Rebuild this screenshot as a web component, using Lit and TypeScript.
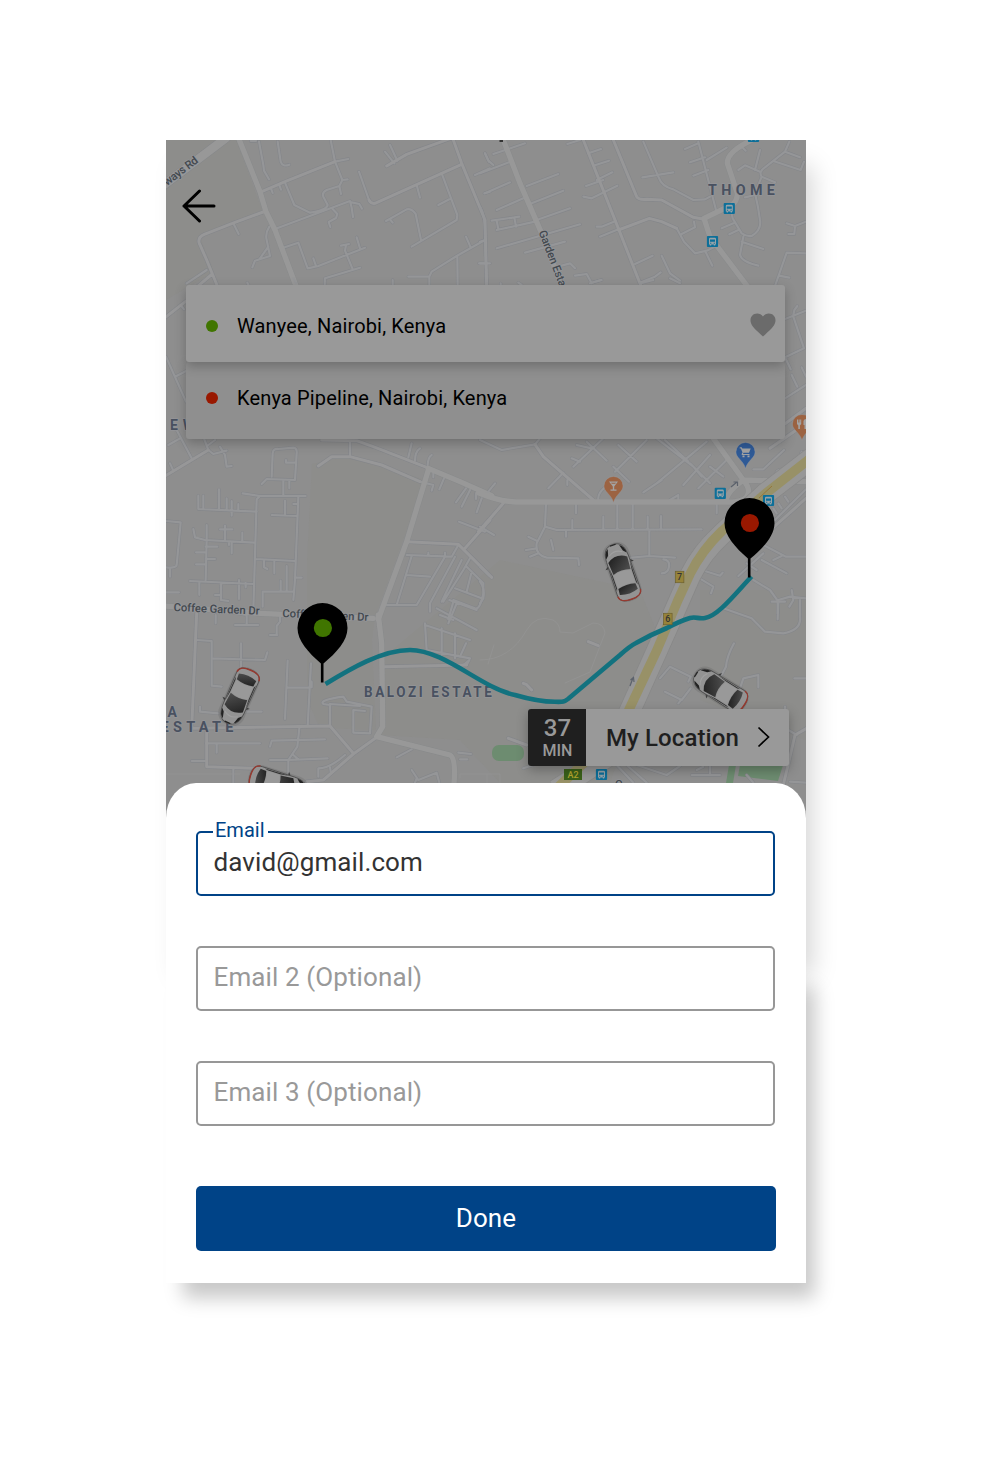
import { LitElement, html, css, svg } from "lit";
import { customElement, property } from "lit/decorators.js";

interface Tile {
  x: number;
  y: number;
  thin: string;
  mid?: string;
  wide?: string;
}

// Street geometry, one entry per map tile; tile units are a third of a pixel.
const TILES: Tile[] = [
  {
    x: 160, y: 130,
    wide: "M238 30L300 185L318 245L345 300L408 468",
    mid: "M300 187L375 155L525 95M318 243L225 277L133 313Q112 322 118 340L140 390L172 468M157 432L112 470M627 210Q632 222 645 220L845 130L905 103M880 30L905 100L975 270L980 468M680 108L740 73L870 26",
    thin: "M345 297L570 213M525 95L565 87M297 35L310 105L312 122L327 148M353 35L362 95Q368 112 388 104M512 30L525 95L547 150L538 168L543 192M547 150L563 148M538 168L500 180Q485 188 490 200L503 225Q500 240 450 248L403 225L375 158M333 175L338 189M358 165L363 179M518 237L532 252L528 264L506 276L511 291M570 213L575 233L579 261M575 217L598 222L606 236M597 125L627 210M770 165L780 203M845 130L892 255L890 270L755 350M868 208L835 225M678 273L740 238Q755 235 767 252L783 330M690 268L698 278M675 65L703 100M690 45L712 92M975 330L890 378L815 425L808 440L745 440M808 440V468M892 380L893 468M918 320L932 352M975 70L987 95M945 135L990 115M973 190L990 185M957 400H990M365 355L415 338L443 415L475 408L615 353M543 347L567 342M558 345L555 362L577 415M590 322L600 355M600 413L495 445L494 468M460 385L468 408M328 290Q315 310 320 330L330 378L285 392L277 412M325 350L300 385M220 280L236 312M698 450V468M262 458L268 470M272 33L288 33"
  },
  {
    x: 480, y: 130,
    wide: "M70 30L120 160L185 310L245 468M820 28Q740 65 742 100L772 190Q772 215 755 225L672 265L690 320L803 470",
    mid: "M400 30L470 200Q475 210 500 208L545 210L640 262L672 268M310 30L415 295L483 468M415 300L508 265L545 275L590 295",
    thin: "M490 35L535 140Q545 170 580 178L640 210L675 208L690 200M655 35L708 240M590 295L612 335L645 370L680 362L715 345M350 290L365 290L407 273M360 320L415 298M605 312L645 292L642 275M675 362L697 407M340 107L387 92M350 150L397 127M310 200L335 205L412 167M318 168L370 150M325 70L363 57M262 42L300 30M487 142L580 127M615 57L655 40M630 97L675 82M640 137L685 120M680 90L740 53M785 50L797 62M840 60L825 120M775 120L795 106L840 125M855 112L915 65L928 35M915 65L960 82M880 93L962 120L972 95M855 112Q835 125 845 140L825 190Q835 230 840 270Q845 300 815 318Q800 320 785 310L758 265L752 240M795 202L825 195M725 295L760 280M748 313L775 300M785 335L850 357M790 320L780 375Q785 395 835 407M920 280L945 288L978 275M945 288L943 312L925 312M978 370L920 368L885 468M897 437L928 443M845 140L885 157M15 190L90 157M50 240L130 205M35 272L118 260M50 300L165 275M50 272L55 297M103 262L108 290M140 168L235 132M155 220L250 182M170 270L270 235M50 355L300 283M135 368L255 335M40 72L85 57L135 40M0 130L92 95M15 70L25 92L40 105M245 407L270 400L285 415M285 437L320 432L335 460M340 457L362 450M465 402L518 377M483 457L525 440L542 427M545 377L570 430L600 452M0 230Q18 260 15 330L20 468M0 335L15 330M0 400L18 400M62 468V460M115 458L125 465"
  },
  {
    x: 160, y: 280,
    mid: "M15 113L80 62",
    thin: "M18 230L78 365M45 290L80 272M62 75L72 88M80 10L140 -30M400 -5L408 10"
  },
  {
    x: 480, y: 280,
    mid: "M910 435L978 385M870 505L978 430",
    thin: "M915 117L978 92M940 110L972 205L915 232M940 105L943 90L952 78M915 232L932 268M935 285L952 320M965 262L978 290M915 355L978 315M330 10L365 0M480 10L520 0M570 -5L600 10"
  },
  {
    x: 160, y: 430,
    wide: "M805 120L740 335L655 568M805 115L900 155L995 197M740 335L740 336",
    mid: "M15 138L145 60M740 335L895 343L995 442M915 355L990 270M485 30L590 32L640 50L800 112M475 108L515 80L570 80L665 105L780 155",
    thin: "M130 20L145 60L160 72L200 62M50 0L95 85M25 45L60 25M30 100L40 122M180 50L195 75L200 110L215 108M165 30L145 45M780 155L820 165L815 182M570 35V80M335 140L338 70Q340 55 355 57L400 53Q412 55 410 70L405 150L320 147L305 162M378 90V98H408M370 150V195M388 150V175M248 190L300 198H437M300 198L290 208L280 540M415 200L405 450L400 510M115 197V237L290 245M130 197V237M177 178V237M200 205V240M215 213V257M235 222V240M375 212V255M335 255L412 258M400 222H414M18 273L62 277L50 405Q48 415 18 412M30 415V440M100 297L105 322L135 330L283 338M140 285V330L137 450M195 287V330M180 298H217M247 308V333M207 338V345M215 338V370M137 350H172M108 367H137M137 387H165M108 403H137M90 453L280 462M118 457V495M183 460V510L205 513M165 495H182M237 450V507M257 460V472M287 387L405 393M312 393V412L322 417M343 395V430M380 408V485M362 452V482M308 530V485H400M405 443H425M18 487H57M897 275L975 305M755 40L745 82M780 55Q765 65 765 92M815 75Q805 80 803 105M820 130V142M852 145L838 178M918 175L888 217M930 180L905 230M948 190V207M965 205L950 247M740 375L875 380L895 345M755 378L710 525M855 380L770 525H680M805 368V378M855 368V378M740 435L810 440M905 390L845 515M885 380L810 520L810 545M930 385L910 420L850 515M920 410L970 460V490Q960 540 945 535L880 510M885 475L965 505M935 425L920 485M880 515L865 568M840 555L880 570"
  },
  {
    x: 480, y: 430,
    wide: "M-5 188Q60 215 110 216H740M700 25L790 150L980 155M790 150Q815 180 800 200Q785 218 740 216Q735 190 790 150",
    mid: "M165 43L190 80L340 210M70 220L-5 305M978 205L860 310",
    thin: "M0 30L65 60L165 43L180 25M355 210Q352 190 375 172M205 175L250 128M262 150V165M280 110L370 25M275 85L300 95M290 45L335 55M320 35L380 92M405 125L500 30M415 45L470 95M400 110L447 155M530 25L640 110L665 140M545 150L490 187M530 160L680 35M555 30L625 95M690 75L610 165M630 100L690 160M745 85L655 175M690 110L730 140M570 210L595 195V212M0 290L42 315M25 185L45 160M198 220L195 290L170 340Q165 375 200 383L295 385L297 405M195 290L230 300L665 298M145 320L170 332M138 360L170 355M150 380L175 370M213 330L220 360M288 225V250M258 305V320M277 270V295M370 260V295M412 220V298M458 220V298M503 260V298M543 258V298M508 300V378L430 385M508 378L585 383M550 388Q570 390 567 410Q565 430 545 430M0 410L28 437M0 455Q15 475 10 505L0 520M820 118H850L912 60M960 80L965 65L978 70M710 225V250M890 135Q885 120 905 118M978 178L885 270M890 250L880 235M905 235L895 220M925 215L915 200M850 345L918 380H978M880 390L905 378M850 370L775 438M845 390L920 430M665 420L720 437L728 428M650 440L700 470L693 490M820 450L870 480L895 515L893 568M895 510L930 500L978 505M935 480L940 510L928 530M800 400L830 420"
  },
  {
    x: 160, y: 600,
    wide: "M15 18L300 40L640 55M655 45L665 130L668 380L650 410L870 465Q888 475 882 550",
    mid: "M100 385L510 378L580 460M650 412L580 462L490 540L440 545M110 40L97 340L95 385M670 200L920 195M140 390V500L280 505",
    thin: "M110 120L155 123V257L185 260M243 130V210M155 175L315 180L322 157M167 45V70M225 75H295M232 40L260 45V75M350 105V78L360 65V40M330 105H352M120 320V335L175 340M305 335H250M383 182L375 357M383 263H445M453 190L443 378M510 378V315L490 312Q475 300 550 290L560 305L635 320L630 400L580 398V330L615 333M510 312L600 318M920 195L928 180L910 195M795 70L800 150L930 175M845 85V165M885 100V175M795 75L930 120M868 0L950 30M830 25L950 90M890 10L865 70M918 130L900 170M330 440L335 422L495 418M418 385L412 440L385 480L503 475M400 465L415 478M138 430H300M170 430V458M95 483H140M330 480H385V530M220 505V548M475 530V505Q510 505 555 465M510 502L512 515M755 448L710 472M755 510L775 540L830 518L838 548M770 535L765 548M895 458L933 462M900 478H922M455 245V262"
  },
  {
    x: 480, y: 600,
    mid: "M910 555L945 405L985 382M325 125L355 137M130 250L140 254L155 270M85 415L140 435",
    thin: "M540 235L570 200L632 230L625 245M555 275L605 300L632 265M595 310L605 298M762 130Q740 170 738 200L725 225M780 265L790 235L835 225V262M943 235H978M730 25L815 55L855 95L910 100Q965 90 960 50V0M893 40V5M875 5H915M410 495L460 548M440 495L500 548M470 495L560 525L600 498M635 525H720M650 510L670 500M690 495V525M930 545L978 548M950 405L925 390M915 400V320M130 505L160 495M800 525L820 548"
  }
];

const TRACKS =
  "M480 660Q510 660 526.700 630Q536 614 553 620Q560 624 560 632L573 633L593 623Q604 623 605 633L590 672L565 683M488 664L494 645M460 778V774H500V783M166 774H240M487 783V774";

const BUSES = [[729.3, 208.5], [712.5, 241.5], [720.3, 493.3], [768.5, 500.5], [601.5, 774.5], [753.5, 136.5]];

const CARS = [[622, 572, -19], [239, 696.500, 204], [720, 689.500, -58], [278, 784, 107]];

@customElement("ride-map")
export class RideMap extends LitElement {
  static styles = css`
    :host { display: block; }
    svg { display: block; width: 640px; height: 690px; }
    .land { fill: #8e8e8e; }
    .tan { fill: #8d8d8b; }
    .green { fill: #6d8c70; }
    .case, .fill, .track { fill: none; stroke-linecap: round; stroke-linejoin: round; }
    .case { stroke: #84868a; }
    .fill { stroke: #989898; }
    .case .thin { stroke-width: 10; }
    .fill .thin { stroke-width: 6.5; stroke: #959698; }
    .case .mid { stroke-width: 12.5; }
    .fill .mid { stroke-width: 9; stroke: #979798; }
    .case .wide { stroke-width: 18.5; stroke: #888a8b; }
    .fill .wide { stroke-width: 16; }
    .track { stroke: #959595; stroke-width: 0.7; }
    .road { fill: none; stroke: #979797; stroke-linejoin: round; }
    .road-edge { fill: none; stroke: #888; stroke-linejoin: round; }
    .lane { fill: none; stroke: #989167; stroke-linejoin: round; }
    .route { fill: none; stroke: #13727f; stroke-width: 4.6; }
    text { font-family: Roboto, sans-serif; }
    .area, .street { paint-order: stroke; stroke: #949598; stroke-width: 1.6px; stroke-linejoin: round; }
    .area { fill: #495160; font-weight: 700; }
    .street { fill: #43494f; font-weight: 500; font-size: 11.3px; }
    .shield { font-size: 9px; fill: #333; font-weight: 500; text-anchor: middle; }
  `;

  private roads(kind: string) {
    return svg`<g class=${kind}>${TILES.map(
      (t) => svg`<g transform="translate(${t.x} ${t.y}) scale(.33333)">
        <path class="thin" d=${t.thin}></path>
        <path class="mid" d=${t.mid ?? ""}></path>
        <path class="wide" d=${t.wide ?? ""}></path>
      </g>`
    )}</g>`;
  }

  private bus([x, y]: number[]) {
    return svg`<g transform="translate(${x} ${y})">
      <rect x="-5.6" y="-5.6" width="11.2" height="11.2" rx="1" fill="#0d6f99"></rect>
      <path d="M-3.500 -2.600Q-3.500 -3.800 -2.300 -3.800H2.300Q3.500 -3.800 3.500 -2.600V3H2.700V4H1.300V3H-1.300V4H-2.700V3H-3.500Z" fill="#97a3a9"></path>
      <path d="M-2.500 -2H2.500V.2H-2.500ZM-2.400 1.200H-1.200V2.200H-2.400ZM1.200 1.200H2.400V2.200H1.200Z" fill="#0d6f99"></path>
    </g>`;
  }

  private car([x, y, angle]: number[]) {
    return svg`<g transform="translate(${x} ${y}) rotate(${angle})">
      <rect x="-13.500" y="-30.500" width="27" height="61" rx="12" fill="#555" opacity=".22"></rect>
      <path d="M-15 -7L-10 -11V-7ZM15 -7L10 -11V-7Z" fill="#3d3d3d"></path>
      <path d="M0 -29C8 -29 11 -24 11.500 -14L12 20C12 27 8 29 0 29C-8 29 -12 27 -12 20L-11.500 -14C-11 -24 -8 -29 0 -29Z" fill="#939393" stroke="#505050" stroke-width=".9"></path>
      <path d="M-10.800 -17Q-10.500 -24 -6 -26.500L-7.800 -20ZM10.800 -17Q10.500 -24 6 -26.500L7.800 -20Z" fill="#222"></path>
      <path d="M-3 -28.300H3" stroke="#222" stroke-width="1.200"></path>
      <path d="M-7 -19Q0 -24 7 -19" stroke="#a0a0a0" fill="none"></path>
      <path d="M-10 -13Q0 -20 10 -13L9 0Q0 -3 -9 0Z" fill="url(#glass)"></path>
      <path d="M-11 -9L-10 1V14L-11 17ZM11 -9L10 1V14L11 17Z" fill="#333"></path>
      <path d="M-9 1Q0 -2.500 9 1L9 14Q0 12 -9 14Z" fill="#999"></path>
      <path d="M-9 15Q0 12.500 9 15L9.500 21Q0 24.500 -9.500 21Z" fill="url(#glass)"></path>
      <path d="M-12 22C-11.500 27 -8 28.800 0 28.800C8 28.800 11.500 27 12 22" fill="none" stroke="#963a30" stroke-width="1.500"></path>
    </g>`;
  }

  private place(x: number, y: number, color: string, glyph: string) {
    return svg`<g transform="translate(${x} ${y})">
      <path d="M-9.600 0A9.600 9.600 0 0 1 9.600 0C9.600 6 2.500 8 0 16.500C-2.500 8 -9.600 6 -9.600 0Z" fill=${color} stroke="#96999c" stroke-width=".5"></path>
      <path d=${glyph} fill="#a3a3a3"></path>
    </g>`;
  }

  private stop(x: number, y: number, color: string) {
    return svg`<g transform="translate(${x} ${y})">
      <path d="M-25 0A25 25 0 0 1 25 0C25 13 14 24.500 1 35.500V54.500H-1.600V35.500C-14 24.500 -25 13 -25 0Z" fill="#000"></path>
      <circle cx=".4" r="9.100" fill=${color}></circle>
    </g>`;
  }

  render() {
    return html`<svg viewBox="166 140 640 690">
      <defs>
        <linearGradient id="glass" x1="0" x2="1" y1="0" y2="1">
          <stop offset="0" stop-color="#1f1f1f"></stop>
          <stop offset="1" stop-color="#505050"></stop>
        </linearGradient>
      </defs>
      <rect class="land" x="166" y="140" width="640" height="690"></rect>
      <path class="tan" d="M166 140H236L262 210L200 236L205 250L214 272L166 300ZM312 464L350 456L425 480L375 617L372 640L376 730L320 728L307 700V560ZM380 660L500 560L640 590L660 640L610 783H500L460 740L380 735ZM700 590L806 590V740L700 700Z"></path>
      <rect class="green" x="492" y="745" width="32" height="16" rx="7"></rect>
      <path class="green" d="M729 765H736L733 783H726ZM740 765H783L778 781L738 776Z"></path>
      ${this.roads("case")}
      <path class="case" stroke-width="9.500" d="M160 188L226 138"></path>
      ${this.roads("fill")}
      <path class="fill" stroke-width="8.500" d="M160 188L226 138"></path>
      <path class="track" d=${TRACKS}></path>
      <path class="road-edge" stroke-width="22" d="M812 458L765 494L722 534Q702 552 690 576L672 617L655 655L610 755L556 790"></path>
      <path class="road" stroke-width="20.500" d="M812 458L765 494L722 534Q702 552 690 576L672 617L655 655L610 755L556 790"></path>
      <path class="lane" stroke-width="9.500" d="M812 457L765 494L722 531Q702 550 690 574L678 600L657 650L626 716L585 762L556 789"></path>
      <path d="M759 498L772 486" stroke="#96702f" stroke-width=".8"></path>

      <text class="area" x="708" y="195" font-size="15" textLength="70" letter-spacing="0"
        lengthAdjust="spacing" transform="translate(708 0) scale(.955 1) translate(-708 0)">THOME</text>
      <text class="area" x="364" y="697" font-size="13.8" transform="translate(364 0) scale(.975 1) translate(-364 0)" textLength="131">BALOZI ESTATE</text>
      <text class="area" x="167.500" y="717" font-size="14">A</text>
      <text class="area" x="160.500" y="732.300" font-size="14.500" textLength="73">ESTATE</text>
      <text class="area" x="170" y="430" font-size="14" textLength="25">EW</text>
      <text class="street" transform="translate(167 186) rotate(-37)" textLength="40">ways Rd</text>
      <text class="street" transform="translate(538.500 232) rotate(69)" textLength="59">Garden Esta</text>
      <text class="street" transform="translate(173.500 611) rotate(2.500)" textLength="86">Coffee Garden Dr</text>
      <text class="street" transform="translate(282.300 617) rotate(2.700)" textLength="86">Coffee Garden Dr</text>

      <rect x="675.300" y="571.300" width="8.600" height="11.400" fill="#96833a" stroke="#6d6130" stroke-width=".7"></rect>
      <text class="shield" x="679.600" y="580.300">7</text>
      ${CARS.map((c) => this.car(c))}
      <path class="route" d="M325.500 684C350 669 382 650 410 650C436 650 464 672 491 686C498 689.500 505 693 515 695C527 698.500 543 701.700 555 701.800C564 702 564 702 568 699L620 655Q630 646 636 643Q650 635 667 628Q680 621 690 618C696 616.500 698 619 705 618C718 616 735 594 751.500 576.500"></path>
      <rect x="663.500" y="613.300" width="8.600" height="11.400" fill="#96833a" stroke="#6d6130" stroke-width=".7"></rect>
      <text class="shield" x="667.800" y="622.300">6</text>
      <rect x="564" y="769" width="18" height="11" fill="#3a6119"></rect>
      <text x="573" y="778.300" font-size="9" text-anchor="middle" fill="#b3a62d" font-weight="500">A2</text>
      <text class="street" x="615" y="787.500" font-size="12">O</text>
      <path d="M630 686L633 678M630.500 680L633.500 677.500L634 682M731 487L737 482M733.500 482H737.500V486" stroke="#5c626c" stroke-width="1.200" fill="none"></path>
      <path d="M499.500 139.500H503V142H499.500Z" fill="#333"></path>
      ${BUSES.map((b) => this.bus(b))}
      ${this.place(613.5, 486, "#9c6342", "M-4.500 -4.500H4.500L.7 .5V3.500H3V4.700H-3V3.500H-.7V.5ZM-2.500 -3.300L-1.700 -2.200H1.700L2.500 -3.300Z")}
      ${this.place(802, 424, "#9c6342", "M-5 -4.500H-4V-1.500H-3.400V-4.500H-2.400V-1.500H-1.800V-4.500H-.8V0L-2.100 1.500V5H-3.700V1.500L-5 0ZM1.500 -3Q2 -5 4 -5V5H2.500V1H1.500Z")}
      ${this.place(745.5, 452, "#2f5a96", "M-5.800 -4.800H-3.800L-3.200 -3.500H5.200L3.500 .8H-2L-2.500 2H4V3H-3.500L-4 2.200L-3 .5L-4.600 -3.600H-5.800ZM-3 3.600H-1V5.200H-3ZM2 3.600H4V5.200H2Z")}
      ${this.stop(322.5, 628, "#407500")}
      ${this.stop(749.5, 523, "#991800")}
    </svg>`;
  }
}

@customElement("email-field")
export class EmailField extends LitElement {
  @property() label = "";
  @property() value = "";
  @property() placeholder = "";

  static styles = css`
    :host { display: block; position: relative; }
    input {
      display: block; box-sizing: border-box; width: 579px; height: 65px;
      border: 2px solid #979797; border-radius: 5px; background: #fff;
      padding: 0 15.500px 4px; outline: none; margin: 0;
      font: 400 26px Roboto, sans-serif; letter-spacing: 0.11px; color: #333;
    }
    input::placeholder { color: #999; opacity: 1; }
    .active { border-color: #004387; }
    .label {
      position: absolute; left: 17px; top: -13px; padding: 0 3px 0 2px;
      background: #fff; color: #004387; font: 400 20px/24px Roboto, sans-serif;
    }
  `;

  render() {
    return html`<input class=${this.label ? "active" : ""} .value=${this.value} placeholder=${this.placeholder} />
      ${this.label ? html`<span class="label">${this.label}</span>` : ""}`;
  }
}

@customElement("app-root")
export class AppRoot extends LitElement {
  static styles = css`
    :host {
      display: block; box-sizing: border-box; height: 1459px; padding: 140px 0 0 166px;
      background: #fff; font-family: Roboto, sans-serif; overflow: hidden;
    }
    .phone { position: relative; isolation: isolate; width: 640px; height: 1143px; display: flex; flex-direction: column; }
    .phone::before, .phone::after { content: ""; position: absolute; z-index: -2; left: 8px; right: 0; }
    .phone::before { top: 20px; height: 810px; box-shadow: 6px 6px 24px rgba(0, 0, 0, 0.17); }
    .phone::after { top: 832px; bottom: 0; box-shadow: 9px 15px 18px rgba(0, 0, 0, 0.22); }
    .map { position: absolute; z-index: -1; left: 0; top: 0; }
    .bar { height: 96px; padding: 49px 15.500px 0; box-sizing: border-box; }
    .back { display: block; width: 34px; height: 34px; }
    .stops { display: flex; flex-direction: column; margin: 49px 21px 0 20px; }
    .stop {
      display: flex; align-items: center; height: 77px; box-sizing: border-box; padding: 4px 9.500px 0 20px;
      border-radius: 3px; font-size: 20px; letter-spacing: 0.15px; color: #000; box-shadow: 0 4px 12px rgba(0, 0, 0, 0.24);
    }
    .from { background: #999; z-index: 1; }
    .to { background: #8f8f8f; padding-bottom: 9px; }
    .dot { width: 12px; height: 12px; border-radius: 50%; margin-right: 19px; }
    .green { background: #407500; }
    .red { background: #991800; }
    .name { flex: 1; }
    .heart { width: 26px; height: 24px; margin-top: -1px; }
    .locate {
      display: flex; align-self: flex-end; margin: 270px 17px 0 0; width: 261px; height: 57px;
      border-radius: 3px; background: #999; box-shadow: 0 4px 12px rgba(0, 0, 0, 0.28); overflow: hidden;
    }
    .eta {
      display: flex; flex-direction: column; align-items: center; width: 58px; background: #1f1f1f; color: #999;
      font-weight: 500; font-size: 24px; line-height: 26px; padding: 6px 0 0 1px; box-sizing: border-box;
    }
    .unit { font-size: 16px; line-height: 19px; }
    .place { flex: 1; padding-left: 20px; font-size: 24px; letter-spacing: 0.1px; line-height: 58px; font-weight: 500; color: #1f1f1f; }
    .chevron { width: 14px; height: 22px; margin: 17px 18px 0 0; }
    .sheet {
      display: flex; flex-direction: column; gap: 50px; flex: none; height: 500px; box-sizing: border-box;
      margin-top: 17px; padding: 48px 30px 0; background: #fff; border-radius: 30px 30px 0 0 / 35px 35px 0 0;
    }
    .done {
      display: block; width: 580px; height: 65px; margin: 10px 0 0; border: 0; border-radius: 5px; padding: 0 0 1px;
      background: #004387; color: #fff; font: 400 26px Roboto, sans-serif; letter-spacing: 0.1px;
    }
  `;

  render() {
    return html`<main class="phone">
      <ride-map class="map"></ride-map>
      <header class="bar">
        <svg class="back" viewBox="0 0 34 34" fill="none" stroke="#000" stroke-width="3" stroke-linecap="round" stroke-linejoin="round">
          <path d="M17.500 2L2 17L17.500 32M2 17H32"></path>
        </svg>
      </header>
      <section class="stops">
        <div class="stop from">
          <span class="dot green"></span><span class="name">Wanyee, Nairobi, Kenya</span>
          <svg class="heart" viewBox="0 0 26 24"><path fill="#6b6b6b" d="M13 23.500L10.500 21.200C4 15.300 .5 12 .5 7.300C.5 3.500 3.400 .6 7.100 .6C9.500 .6 11.700 1.700 13 3.400C14.300 1.700 16.500 .6 18.900 .6C22.600 .6 25.500 3.500 25.500 7.300C25.500 12 22 15.300 15.500 21.200Z"></path></svg>
        </div>
        <div class="stop to">
          <span class="dot red"></span><span class="name">Kenya Pipeline, Nairobi, Kenya</span>
        </div>
      </section>
      <section class="locate">
        <div class="eta"><span>37</span><span class="unit">MIN</span></div>
        <div class="place">My Location</div>
        <svg class="chevron" viewBox="0 0 14 22" fill="none" stroke="#000" stroke-width="1.700"><path d="M1.500 1.500L11.500 11L1.500 20.500"></path></svg>
      </section>
      <section class="sheet">
        <email-field label="Email" value="david@gmail.com"></email-field>
        <email-field placeholder="Email 2 (Optional)"></email-field>
        <email-field placeholder="Email 3 (Optional)"></email-field>
        <button class="done">Done</button>
      </section>
    </main>`;
  }
}
